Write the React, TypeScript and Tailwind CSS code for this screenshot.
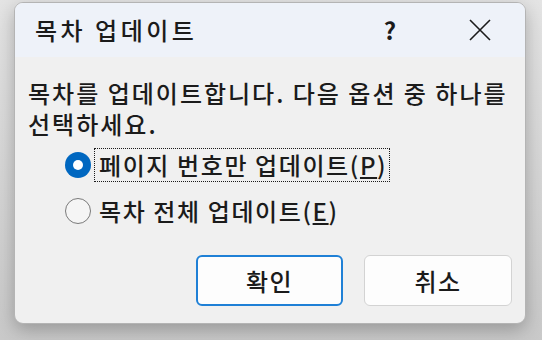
export default function App() {
  return (
    <div
      className="w-[542px] h-[340px] overflow-hidden bg-gradient-to-b from-[#e4e4e4] to-[#c9c9c9] pl-[14px] pt-[2px] text-[#1b1b1b] font-medium"
      style={{ fontFamily: '"Noto Sans CJK KR", "Noto Sans", sans-serif' }}
    >
      <div className="w-[512px] h-[322px] rounded-[9px] border border-[#b4b4b4] bg-[#f0f0f0] overflow-hidden flex flex-col shadow-[0_6px_18px_rgba(0,0,0,0.25)]">
        {/* title bar */}
        <div className="h-[54px] shrink-0 bg-[#eef2f9] flex items-center">
          <span className="pl-[20px] text-[24px] leading-none tracking-[3.5px]">목차 업데이트</span>
          <div className="ml-auto flex h-full">
            <div className="w-[90px] h-full flex items-center justify-center text-[24px] leading-none font-semibold">?</div>
            <div className="w-[90px] h-full flex items-center justify-center">
              <svg width="22" height="22" viewBox="0 0 22 22" fill="none" stroke="#1b1b1b" strokeWidth="1.6">
                <path d="M1 1L21 21M21 1L1 21" />
              </svg>
            </div>
          </div>
        </div>

        {/* body */}
        <div className="flex flex-col pt-[20px] pl-[13px] pr-[8px]">
          <p className="text-[24px] leading-[31px] tracking-[2px] whitespace-nowrap">
            목차를 업데이트합니다. 다음 옵션 중 하나를
            <br />
            선택하세요.
          </p>

          <div className="mt-[9px] ml-[37px] flex flex-col gap-[12px]">
            <label className="h-[34px] flex items-center">
              <span className="w-[26px] h-[26px] rounded-full bg-[#0067c0] flex items-center justify-center">
                <span className="w-[10px] h-[10px] rounded-full bg-white" />
              </span>
              <span className="ml-[3px] h-[34px] pl-[4px] pr-[2px] flex items-center border border-dotted border-[#1b1b1b] text-[24px] leading-none tracking-[1.6px]">
                페이지 번호만 업데이트(<span className="underline underline-offset-2">P</span>)
              </span>
            </label>
            <label className="h-[34px] flex items-center">
              <span className="w-[26px] h-[26px] rounded-full border-[1.5px] border-[#7a7a7a] bg-[#f5f5f5]" />
              <span className="ml-[3px] h-[34px] pl-[4px] pr-[2px] flex items-center border border-transparent text-[24px] leading-none tracking-[1.6px]">
                목차 전체 업데이트(<span className="underline underline-offset-2">E</span>)
              </span>
            </label>
          </div>

          <div className="mt-[27px] pr-[5px] flex justify-end gap-[21px]">
            <button className="w-[147px] h-[51px] rounded-[6px] bg-[#fdfdfd] border-2 border-[#1f80d6] text-[24px] leading-none tracking-[1.5px]">
              확인
            </button>
            <button className="w-[148px] h-[51px] rounded-[6px] bg-[#fdfdfd] border border-[#d3d3d3] text-[24px] leading-none tracking-[1.5px]">
              취소
            </button>
          </div>
        </div>
      </div>
    </div>
  );
}
